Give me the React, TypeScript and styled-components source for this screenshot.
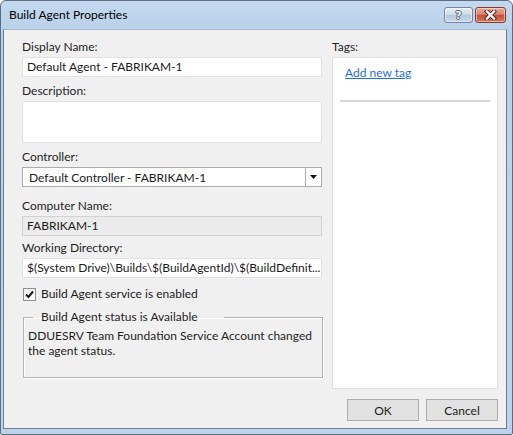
import React from 'react';
import styled, { createGlobalStyle } from 'styled-components';

const GlobalStyle = createGlobalStyle`
  html, body { margin: 0; padding: 0; background: #ffffff; }
  body { font-family: Lato, "Noto Sans", sans-serif; font-size: 12px; color: #1b1b1b; }
  * { box-sizing: border-box; }
`;

const Window = styled.div`
  width: 513px;
  height: 435px;
  display: flex;
  flex-direction: column;
  background: linear-gradient(#c4d9ef, #bad1ea 28px, #bcd3ec);
  border: 1px solid #5d6d82;
  border-radius: 6px 6px 2px 2px;
  overflow: hidden;
`;

const TitleBar = styled.div`
  height: 28px;
  flex: none;
  display: flex;
  align-items: center;
  padding: 0 6px 0 8px;
`;

const Title = styled.div`
  flex: 1;
  font-size: 12px;
  line-height: 16px;
  color: #000;
`;

const CaptionButtons = styled.div`
  display: flex;
  gap: 2px;
`;

const CaptionButton = styled.div<{ $variant: 'help' | 'close' }>`
  width: ${(p) => (p.$variant === 'close' ? 31 : 29)}px;
  height: 16px;
  border-radius: 3px;
  display: flex;
  align-items: center;
  justify-content: center;
  border: 1px solid ${(p) => (p.$variant === 'close' ? '#8b3a30' : '#71869f')};
  background: ${(p) =>
    p.$variant === 'close'
      ? 'linear-gradient(#eaa999, #d98572 45%, #c5503d 52%, #d3765f)'
      : 'linear-gradient(#e6eef8, #cfdcec 45%, #b5c9e0 52%, #c8d8eb)'};
  box-shadow: inset 0 0 0 1px rgba(255, 255, 255, 0.45);
`;

const HelpGlyph = styled.span`
  font-family: "DejaVu Sans", sans-serif;
  font-weight: bold;
  font-size: 11px;
  line-height: 11px;
  color: #eef2f7;
  text-shadow: 1px 0 0 #55657a, -1px 0 0 #55657a, 0 1px 0 #55657a, 0 -1px 0 #55657a;
`;

const Client = styled.div`
  flex: 1;
  margin: 0 5px 5px 2px;
  background: #f0f0f0;
  border: 1px solid #6f7c8b;
  border-top-color: #a7b9ce;
  display: flex;
  flex-direction: column;
  padding: 9px 8px 7px 18px;
`;

const Main = styled.div`
  flex: 1;
  display: grid;
  grid-template-columns: 300px 166px;
  column-gap: 10px;
  min-height: 0;
`;

const Column = styled.div`
  display: flex;
  flex-direction: column;
  min-height: 0;
`;

const Field = styled.div<{ $mt: number }>`
  margin-top: ${(p) => p.$mt}px;
  display: flex;
  flex-direction: column;
  gap: 2px;
`;

const Label = styled.div`
  line-height: 16px;
  font-size: 12px;
  color: #1e1e1e;
`;

const TextBox = styled.div<{ $disabled?: boolean; $height?: number }>`
  height: ${(p) => p.$height ?? 20}px;
  border: 1px solid ${(p) => (p.$disabled ? '#d2d2d2' : '#e2e2e2')};
  background: ${(p) => (p.$disabled ? '#ebebeb' : '#ffffff')};
  padding: 0 4px;
  display: flex;
  align-items: center;
  white-space: nowrap;
  overflow: hidden;
  color: #1a1a1a;
  line-height: 16px;
`;

const Combo = styled.div`
  height: 20px;
  border: 1px solid #acacac;
  background: #ffffff;
  display: flex;
`;

const ComboValue = styled.div`
  flex: 1;
  padding-left: 6px;
  display: flex;
  align-items: center;
  white-space: nowrap;
  overflow: hidden;
  color: #1a1a1a;
`;

const ComboArrow = styled.div`
  width: 16px;
  border-left: 1px solid #acacac;
  display: flex;
  align-items: center;
  justify-content: center;
`;

const CheckRow = styled.label`
  margin-top: 8px;
  height: 16px;
  display: flex;
  align-items: center;
  gap: 5px;
  padding-left: 1px;
  line-height: 16px;
`;

const CheckBox = styled.span`
  width: 13px;
  height: 13px;
  border: 1px solid #8e8f8f;
  background: linear-gradient(#f0f0f0, #ffffff);
  display: flex;
  align-items: center;
  justify-content: center;
`;

const GroupBox = styled.fieldset`
  margin: 7px 0 0 1px;
  padding: 3px 6px 0 4px;
  width: 300px;
  height: 69px;
  min-inline-size: 0;
  border: 1px solid #b4b4b4;
  box-shadow: inset 1px 1px 0 #ffffff, 1px 1px 0 #ffffff;
`;

const Legend = styled.legend`
  margin-left: 5px;
  padding: 0 26px 0 8px;
  line-height: 16px;
  color: #1e1e1e;
`;

const GroupText = styled.div`
  line-height: 15px;
  color: #1e1e1e;
`;

const TagsPanel = styled.div`
  flex: 1;
  background: #ffffff;
  border: 1px solid #e0e0e0;
  padding: 7px 7px 0 7px;
  display: flex;
  flex-direction: column;
`;

const Link = styled.a`
  align-self: flex-start;
  margin-left: 5px;
  line-height: 16px;
  color: #1e6fd6;
  text-decoration: underline;
  cursor: pointer;
`;

const Separator = styled.div`
  margin-top: 19px;
  height: 2px;
  background: #d6d6d6;
`;

const Footer = styled.div`
  margin-top: 10px;
  display: flex;
  justify-content: flex-end;
  gap: 7px;
`;

const Button = styled.button`
  width: 72px;
  height: 22px;
  border: 1px solid #adadad;
  background: #e1e1e1;
  font-family: inherit;
  font-size: 12px;
  color: #1a1a1a;
  padding: 0;
`;

export default function App() {
  return (
    <>
      <GlobalStyle />
      <Window>
        <TitleBar>
          <Title>Build Agent Properties</Title>
          <CaptionButtons>
            <CaptionButton $variant="help">
              <HelpGlyph>?</HelpGlyph>
            </CaptionButton>
            <CaptionButton $variant="close">
              <svg width="13" height="10" viewBox="0 0 13 10">
                <path d="M3 1.5 L10 8.5 M10 1.5 L3 8.5" stroke="#5a2019" strokeWidth="4.2" strokeLinecap="square" />
                <path d="M3 1.5 L10 8.5 M10 1.5 L3 8.5" stroke="#ffffff" strokeWidth="2.4" strokeLinecap="square" />
              </svg>
            </CaptionButton>
          </CaptionButtons>
        </TitleBar>
        <Client>
          <Main>
            <Column>
              <Field $mt={0}>
                <Label>Display Name:</Label>
                <TextBox>Default Agent - FABRIKAM-1</TextBox>
              </Field>
              <Field $mt={6}>
                <Label>Description:</Label>
                <TextBox $height={42} />
              </Field>
              <Field $mt={6}>
                <Label>Controller:</Label>
                <Combo>
                  <ComboValue>Default Controller - FABRIKAM-1</ComboValue>
                  <ComboArrow>
                    <svg width="7" height="4" viewBox="0 0 7 4">
                      <path d="M0 0 H7 L3.5 4 Z" fill="#111" />
                    </svg>
                  </ComboArrow>
                </Combo>
              </Field>
              <Field $mt={11}>
                <Label>Computer Name:</Label>
                <TextBox $disabled>FABRIKAM-1</TextBox>
              </Field>
              <Field $mt={4}>
                <Label>Working Directory:</Label>
                <TextBox>$(System Drive)\Builds\$(BuildAgentId)\$(BuildDefinit...</TextBox>
              </Field>
              <CheckRow>
                <CheckBox>
                  <svg width="11" height="11" viewBox="0 0 11 11">
                    <path d="M2 5.5 L4.5 8 L9 2.5" stroke="#1a1a1a" strokeWidth="2" fill="none" />
                  </svg>
                </CheckBox>
                Build Agent service is enabled
              </CheckRow>
              <GroupBox>
                <Legend>Build Agent status is Available</Legend>
                <GroupText>
                  DDUESRV Team Foundation Service Account changed
                  <br />
                  the agent status.
                </GroupText>
              </GroupBox>
            </Column>
            <Column>
              <Field $mt={0}>
                <Label>Tags:</Label>
              </Field>
              <TagsPanel style={{ marginTop: 2 }}>
                <Link>Add new tag</Link>
                <Separator />
              </TagsPanel>
            </Column>
          </Main>
          <Footer>
            <Button>OK</Button>
            <Button>Cancel</Button>
          </Footer>
        </Client>
      </Window>
    </>
  );
}
